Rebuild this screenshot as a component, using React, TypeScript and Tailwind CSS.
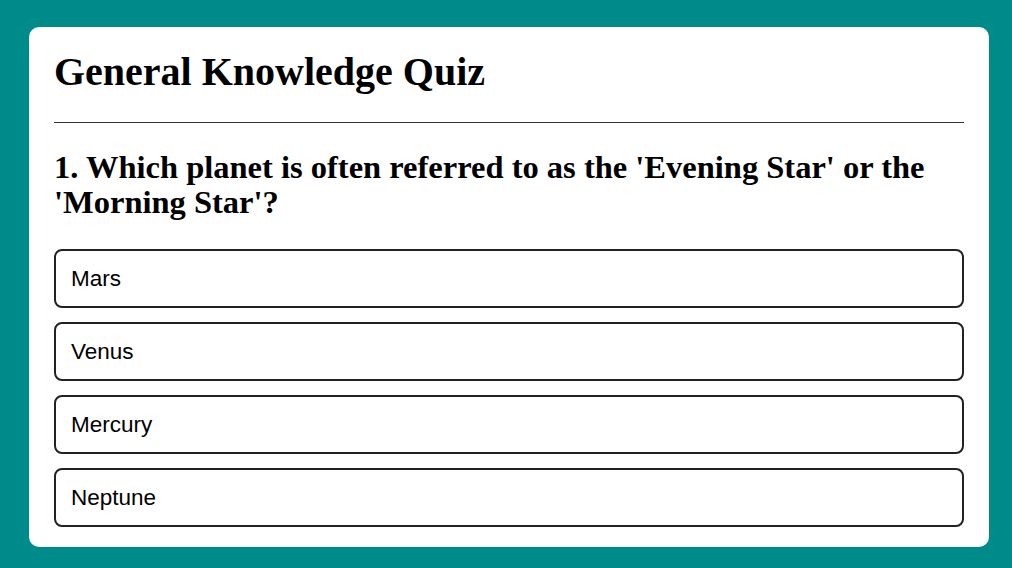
const options = ["Mars", "Venus", "Mercury", "Neptune"];

export default function App() {
  return (
    <div className="min-h-[568px] w-[1012px] bg-[#008b8b] pt-[27px] pl-[29px]">
      <div className="w-[960px] h-[520px] rounded-[10px] bg-white px-[25px] pt-[21px]">
        <h1 className="font-['Liberation_Serif',serif] text-[40px] font-bold leading-[48px] text-black pb-[26px] border-b border-[#333]">
          General Knowledge Quiz
        </h1>
        <h2 className="mt-[27px] font-['Liberation_Serif',serif] text-[32.5px] font-bold leading-[35px] text-black">
          1. Which planet is often referred to as the 'Evening Star' or the 'Morning Star'?
        </h2>
        <div className="mt-[29px] flex flex-col gap-[14px]">
          {options.map((opt) => (
            <button
              key={opt}
              className="h-[59px] w-full rounded-[8px] border-2 border-[#222] bg-white px-[15px] text-left font-['Liberation_Sans',Arial,sans-serif] text-[22.5px] text-black"
            >
              {opt}
            </button>
          ))}
        </div>
      </div>
    </div>
  );
}
